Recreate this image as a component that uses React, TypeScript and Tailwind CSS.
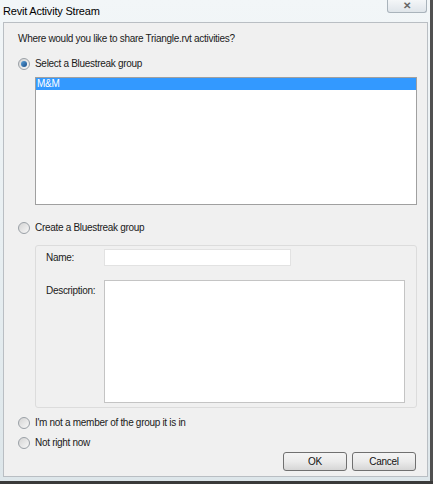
import React from "react";

function Radio({ checked }: { checked?: boolean }) {
  return (
    <span className="relative inline-flex w-[12px] h-[12px] rounded-full border border-[#9aa0a6] bg-gradient-to-br from-[#d4d4d4] to-[#f8f8f8] items-center justify-center shrink-0">
      {checked && (
        <span className="w-[6px] h-[6px] rounded-full bg-gradient-to-br from-[#5aa0d8] to-[#1a4f8a]" />
      )}
    </span>
  );
}

function Button({ label }: { label: string }) {
  return (
    <div className="w-[64px] h-[19px] rounded-[3px] border border-[#707070] bg-gradient-to-b from-[#f4f4f4] via-[#ebebeb] to-[#d6d6d6] flex items-center justify-center text-[10px] text-[#111]">
      {label}
    </div>
  );
}

export default function App() {
  return (
    <div
      className="w-[433px] h-[484px] bg-white overflow-hidden relative tracking-[-0.3px]"
      style={{ fontFamily: '"Liberation Sans", Arial, sans-serif' }}
    >
      {/* window frame */}
      <div className="w-[433px] h-[481px] flex flex-col bg-gradient-to-b from-[#f2f6f8] via-[#e8eff2] to-[#dde6ea] border-r-[3px] border-r-[#505050]">
        {/* title bar */}
        <div className="h-[22px] flex items-center pl-[3px] relative">
          <span className="text-[11px] tracking-[-0.2px] text-black">Revit Activity Stream</span>
          <div className="absolute left-[387px] top-0 w-[40px] h-[13px] rounded-b-[3px] border border-t-0 border-[#a9b3bb] bg-gradient-to-b from-[#f4f6f8] to-[#dfe5ea] flex items-center justify-center text-[10px] text-[#666] font-bold leading-none">
            ✕
          </div>
        </div>
        {/* client */}
        <div className="ml-[3px] mr-[2px] h-[455px] bg-[#f0f0f0] border border-[#b9bec3] text-[10px] text-[#1a1a1a] flex flex-col pl-[13px] pr-[10px]">
          <div className="mt-[9px] h-[13px] leading-[13px] pl-[1px]">
            Where would you like to share Triangle.rvt activities?
          </div>
          <div className="mt-[12px] flex items-center gap-[5px] pl-[1px] h-[13px]">
            <Radio checked />
            <span>Select a Bluestreak group</span>
          </div>
          <div className="mt-[7px] ml-[18px] h-[128px] bg-white border border-[#a0a0a0]">
            <div className="h-[12px] bg-[#3399ff] text-white leading-[12px] pl-[1px]">
              M&amp;M
            </div>
          </div>
          <div className="mt-[16px] flex items-center gap-[5px] pl-[1px] h-[13px]">
            <Radio />
            <span>Create a Bluestreak group</span>
          </div>
          <div className="mt-[11px] ml-[18px] h-[163px] rounded-[3px] border border-[#dcdcdc] flex flex-col pl-[10px] pr-[11px]">
            <div className="mt-[3px] flex items-center">
              <span className="w-[58px]">Name:</span>
              <div className="w-[187px] h-[17px] bg-white border border-[#e2e2e2]" />
            </div>
            <div className="mt-[14px] flex items-start">
              <span className="w-[58px] mt-[3px]">Description:</span>
              <div className="flex-1 h-[123px] bg-white border border-[#c4c4c4]" />
            </div>
          </div>
          <div className="mt-[8px] flex items-center gap-[5px] pl-[1px] h-[13px]">
            <Radio />
            <span>I'm not a member of the group it is in</span>
          </div>
          <div className="mt-[7px] flex items-center gap-[5px] pl-[1px] h-[13px]">
            <Radio />
            <span>Not right now</span>
          </div>
          <div className="mt-[3px] flex justify-end gap-[5px] pr-[1px]">
            <Button label="OK" />
            <Button label="Cancel" />
          </div>
        </div>
      </div>
      <div className="h-[3px] bg-[#3a3a3a]" />
    </div>
  );
}
